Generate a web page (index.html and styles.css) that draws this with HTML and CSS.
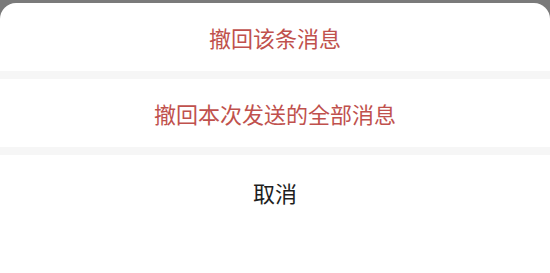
FILE: index.html
```html
<!DOCTYPE html>
<html lang="zh-CN">
<head>
    <meta charset="UTF-8">
    <meta name="viewport" content="width=device-width, initial-scale=1.0">
    <title>撤回消息</title>
    <link rel="stylesheet" href="styles.css">
</head>
<body>
    <div class="sheet">
        <div class="item danger">撤回该条消息</div>
        <div class="divider"></div>
        <div class="item danger">撤回本次发送的全部消息</div>
        <div class="divider"></div>
        <div class="item cancel">取消</div>
    </div>
</body>
</html>
```

FILE: styles.css
```css
* {
    margin: 0;
    padding: 0;
    box-sizing: border-box;
}

body {
    height: 100vh;
    background: #7a7a7a;
    padding-top: 3px;
    overflow: hidden;
    font-family: "Noto Sans CJK SC", "Noto Sans", sans-serif;
}

.sheet {
    height: 100%;
    background: #fff;
    border-radius: 16px 16px 0 0;
    display: flex;
    flex-direction: column;
}

.item {
    height: 68px;
    display: flex;
    align-items: center;
    justify-content: center;
    font-size: 22px;
}

.danger {
    color: #c0514d;
}

.cancel {
    height: 73px;
    color: #1e1e1e;
}

.divider {
    height: 8px;
    background: #f6f6f6;
}
```
